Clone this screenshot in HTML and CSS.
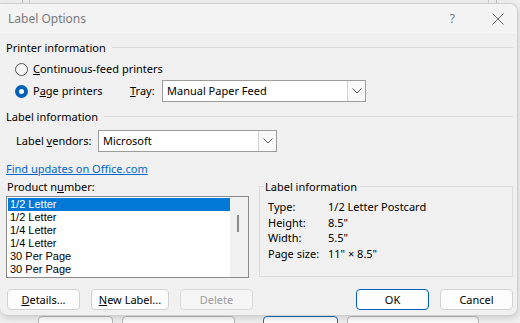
FILE: index.html
```html
<!DOCTYPE html>
<html lang="en">
<head>
	<meta charset="UTF-8">
	<title>Label Options</title>
	<link rel="stylesheet" href="styles.css">
</head>
<body>

<div class="desk">
	<!-- bits of the window behind the dialog -->
	<div class="behind line-a"></div>
	<div class="behind line-b"></div>
	<div class="behind line-c"></div>
	<div class="behind line-d"></div>
	<div class="behind btn-a"></div>
	<div class="behind btn-b"></div>
	<div class="behind btn-c"></div>
	<div class="behind btn-d"></div>

	<div class="dialog">
		<div class="titlebar">
			<span class="title">Label Options</span>
			<span class="help">?</span>
			<span class="close">
				<svg width="12" height="12" viewBox="0 0 12 12"><path d="M0.5 0.5L11.5 11.5M11.5 0.5L0.5 11.5" stroke="#6b6b6b" stroke-width="1" fill="none"/></svg>
			</span>
		</div>

		<div class="content">
			<div class="group-head"><span>Printer information</span></div>

			<div class="radio-row first">
				<span class="radio"></span>
				<span class="radio-text"><u>C</u>ontinuous-feed printers</span>
			</div>
			<div class="radio-row">
				<span class="radio on"></span>
				<span class="radio-text page">P<u>a</u>ge printers</span>
				<span class="tray-label"><u>T</u>ray:</span>
				<div class="select tray">
					<span class="select-text">Manual Paper Feed</span>
					<span class="drop"><svg width="10" height="6" viewBox="0 0 10 6"><path d="M0.5 0.5L5 5L9.5 0.5" stroke="#555" fill="none"/></svg></span>
				</div>
			</div>

			<div class="group-head second"><span>Label information</span></div>

			<div class="vendor-row">
				<span class="vendor-label">Label <u>v</u>endors:</span>
				<div class="select vendor">
					<span class="select-text">Microsoft</span>
					<span class="drop"><svg width="10" height="6" viewBox="0 0 10 6"><path d="M0.5 0.5L5 5L9.5 0.5" stroke="#555" fill="none"/></svg></span>
				</div>
			</div>

			<a href="#" class="link">Find updates on Office.com</a>

			<div class="lower">
				<div class="product">
					<div class="product-label">Product n<u>u</u>mber:</div>
					<div class="listbox">
						<ul class="items">
							<li class="selected">1/2 Letter</li>
							<li>1/2 Letter</li>
							<li>1/4 Letter</li>
							<li>1/4 Letter</li>
							<li>30 Per Page</li>
							<li>30 Per Page</li>
						</ul>
						<div class="scroll"><div class="thumb"></div></div>
					</div>
				</div>

				<div class="info-box">
					<span class="info-title">Label information</span>
					<div class="info-grid">
						<span>Type:</span><span>1/2 Letter Postcard</span>
						<span>Height:</span><span>8.5"</span>
						<span>Width:</span><span>5.5"</span>
						<span>Page size:</span><span>11" &times; 8.5"</span>
					</div>
				</div>
			</div>

			<div class="buttons">
				<button class="btn"><u>D</u>etails...</button>
				<button class="btn"><u>N</u>ew Label...</button>
				<button class="btn disabled">Delete</button>
				<span class="spacer"></span>
				<button class="btn default">OK</button>
				<button class="btn">Cancel</button>
			</div>
		</div>
	</div>
</div>

</body>
</html>
```

FILE: styles.css
```css
*{
	margin: 0;
	padding: 0;
	box-sizing: border-box;
}
body{
	width: 520px;
	height: 323px;
	overflow: hidden;
	background: #efefef;
	font-family: "Noto Sans", "Open Sans", sans-serif;
	font-size: 11px;
	line-height: 16px;
	color: #000;
	white-space: nowrap;
}
.desk{
	position: relative;
	width: 520px;
	height: 323px;
}

/* window behind */
.behind{
	position: absolute;
	border: 1px solid #b9b9b9;
}
.line-a{ left: 22px; top: -2px; width: 1px; height: 8px; border-width: 0 0 0 1px; }
.line-b{ left: 29px; top: -2px; width: 1px; height: 8px; border-width: 0 0 0 1px; border-color: #d0d0d0; }
.line-c{ left: 488px; top: -2px; width: 1px; height: 8px; border-width: 0 0 0 1px; border-color: #d0d0d0; }
.line-d{ left: 496px; top: -2px; width: 1px; height: 8px; border-width: 0 0 0 1px; }
.btn-a{ left: 38px; top: 316px; width: 75px; height: 14px; border-radius: 4px; background: #fbfbfb; }
.btn-b{ left: 122px; top: 316px; width: 113px; height: 14px; border-radius: 4px; background: #fbfbfb; }
.btn-c{ left: 263px; top: 316px; width: 75px; height: 14px; border-radius: 4px; background: #fbfbfb; border-color: #1a6fc1; }
.btn-d{ left: 347px; top: 316px; width: 132px; height: 14px; border-radius: 4px; background: #fbfbfb; }

.dialog{
	position: absolute;
	left: 0;
	top: 3px;
	width: 518px;
	height: 313px;
	background: #f0f0f0;
	border: 1px solid #cfcfcf;
	border-left: none;
	border-radius: 0 8px 8px 8px;
	box-shadow: 0 2px 6px rgba(0,0,0,0.15);
	overflow: hidden;
}
.titlebar{
	height: 31px;
	display: flex;
	align-items: center;
	padding: 0 13px 0 8px;
	background: #f3f3f3;
	border-bottom: 1px solid #ececec;
}
.title{
	color: #7a7a7a;
	flex: 1;
	font-size: 12px;
}
.help{
	color: #7a7a7a;
	margin-right: 37px;
	font-size: 12px;
}
.close{
	display: flex;
}

.content{
	padding: 4px 4px 0 6px;
}
.group-head{
	display: flex;
	align-items: center;
	height: 16px;
	margin-top: 1px;
}
.group-head::after{
	content: "";
	flex: 1;
	height: 1px;
	background: #d9d9d9;
	margin-left: 6px;
	margin-top: -1px;
}
.group-head.second{
	margin-top: 7px;
}

.radio-row{
	display: flex;
	align-items: center;
	height: 22px;
	padding-left: 9px;
}
.radio-row.first{
	margin-top: 2px;
}
.radio{
	width: 13px;
	height: 13px;
	border-radius: 50%;
	border: 1px solid #555;
	background: #f7f7f7;
	margin-right: 5px;
}
.radio.on{
	border: 4px solid #005fb8;
	background: #fff;
}
.radio-text.page{
	width: 97px;
}
.tray-label{
	width: 32px;
}

.select{
	display: flex;
	align-items: center;
	height: 22px;
	background: #fff;
	border: 1px solid #9c9c9c;
	padding-left: 4px;
}
.select-text{
	flex: 1;
}
.drop{
	width: 18px;
	height: 20px;
	display: flex;
	align-items: center;
	justify-content: center;
	border-left: 1px solid #d4d4d4;
	background: #f9f9f9;
}
.tray{
	width: 204px;
}

.vendor-row{
	display: flex;
	align-items: center;
	margin-top: 5px;
	padding-left: 10px;
}
.vendor-label{
	width: 82px;
}
.vendor{
	width: 179px;
}

.link{
	display: block;
	margin-top: 9px;
	color: #0066cc;
	text-decoration: underline;
	width: max-content;
}

.lower{
	display: flex;
	gap: 10px;
	margin-top: 2px;
}
.product{
	width: 243px;
}
.product-label{
	margin-left: 1px;
}
.listbox{
	display: flex;
	height: 82px;
	border: 1px solid #8a8a8a;
	background: #fff;
	margin-top: 1px;
	padding: 1px 0 0 1px;
}
.items{
	list-style-type: none;
	flex: 1;
	font-family: "Liberation Sans", Arial, sans-serif;
	font-size: 11px;
}
.items li{
	height: 13px;
	line-height: 13px;
	padding-left: 2px;
}
.items li.selected{
	background: #0078d7;
	color: #fff;
}
.scroll{
	width: 18px;
	background: #f0f0f0;
	margin-top: -1px;
	position: relative;
}
.thumb{
	position: absolute;
	left: 7px;
	top: 18px;
	width: 2px;
	height: 17px;
	background: #8b8b8b;
}

.info-box{
	flex: 1;
	height: 91px;
	margin-top: 7px;
	border: 1px solid #dcdcdc;
	position: relative;
	padding: 12px 0 0 8px;
}
.info-title{
	position: absolute;
	left: 4px;
	top: -8px;
	background: #f0f0f0;
	padding: 0 1px;
}
.info-grid{
	display: grid;
	grid-template-columns: 60px auto;
	grid-auto-rows: 15.7px;
}

.buttons{
	display: flex;
	gap: 11px;
	margin-top: 11px;
	padding-left: 1px;
}
.spacer{
	flex: 1;
}
.btn{
	height: 21px;
	width: 73px;
	font-family: inherit;
	font-size: 11px;
	background: #fdfdfd;
	border: 1px solid #d1d1d1;
	border-radius: 4px;
	color: #000;
}
.btn:nth-child(2){
	width: 78px;
}
.btn.disabled{
	color: #9d9d9d;
	background: #f5f5f5;
	border-color: #dadada;
}
.btn.default{
	border-color: #005fb8;
}
```
